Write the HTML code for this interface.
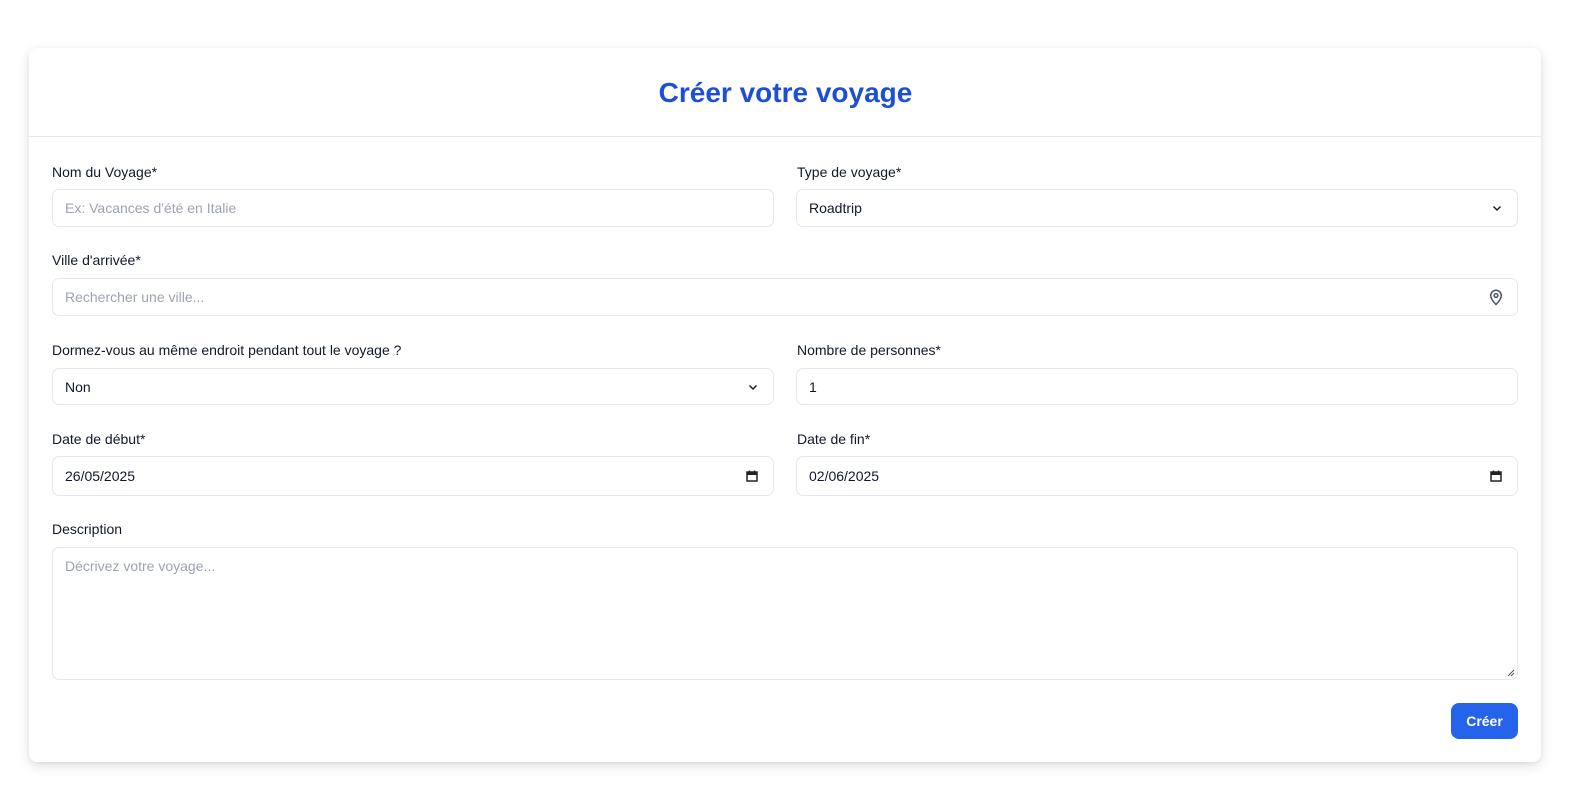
<!DOCTYPE html>
<html><head><meta charset="utf-8"><style>
*{box-sizing:border-box;margin:0;padding:0}
body{width:1595px;height:806px;background:#fff;font-family:"Liberation Sans",sans-serif;position:relative;overflow:hidden}
.card{position:absolute;left:29px;top:48px;width:1512px;height:714px;background:#fff;border-radius:8px;box-shadow:0 4px 12px rgba(0,0,0,0.12),0 1px 3px rgba(0,0,0,0.06)}
.hdr{position:absolute;left:29px;top:136px;width:1512px;height:1px;background:#e5e7eb}
h1{position:absolute;left:0;width:1571px;top:77px;text-align:center;font-size:28px;font-weight:bold;color:#1d4ed8}
.l{position:absolute;font-size:14px;color:#111827}
.i{position:absolute;border:1px solid #e2e8f0;border-radius:7px;font-size:14px;color:#111827;padding-left:12px;display:flex;align-items:center;background:#fff}
.ph{color:#9ca3af}
.ic{position:absolute;right:14px;top:50%;transform:translateY(-50%)}
.btn{position:absolute;left:1451px;top:703px;width:67px;height:36px;background:#2563eb;border-radius:8px;color:#fff;font-weight:bold;font-size:14px;display:flex;align-items:center;justify-content:center}
</style></head><body>
<div class="card"></div><div class="hdr"></div>
<h1>Créer votre voyage</h1>

<div class="l" style="left:52px;top:164px">Nom du Voyage*</div>
<div class="i" style="left:52px;top:189px;width:722px;height:38px"><span class="ph">Ex: Vacances d'été en Italie</span></div>
<div class="l" style="left:797px;top:164px">Type de voyage*</div>
<div class="i" style="left:796px;top:189px;width:722px;height:38px">Roadtrip<svg class="ic" width="12" height="12" viewBox="0 0 12 12"><path d="M2.5 4.5L6 8l3.5-3.5" fill="none" stroke="#111827" stroke-width="1.4"/></svg></div>

<div class="l" style="left:52px;top:252px">Ville d'arrivée*</div>
<div class="i" style="left:52px;top:278px;width:1466px;height:38px"><span class="ph">Rechercher une ville...</span><svg class="ic" style="right:12px" width="18" height="18" viewBox="0 0 24 24"><path d="M12 22s-7-6.5-7-12a7 7 0 0 1 14 0c0 5.5-7 12-7 12z" fill="none" stroke="#4b5563" stroke-width="2"/><circle cx="12" cy="10" r="2.5" fill="none" stroke="#4b5563" stroke-width="2"/></svg></div>

<div class="l" style="left:52px;top:342px">Dormez-vous au même endroit pendant tout le voyage ?</div>
<div class="i" style="left:52px;top:368px;width:722px;height:37px">Non<svg class="ic" width="12" height="12" viewBox="0 0 12 12"><path d="M2.5 4.5L6 8l3.5-3.5" fill="none" stroke="#111827" stroke-width="1.4"/></svg></div>
<div class="l" style="left:797px;top:342px">Nombre de personnes*</div>
<div class="i" style="left:796px;top:368px;width:722px;height:37px">1</div>

<div class="l" style="left:52px;top:431px">Date de début*</div>
<div class="i" style="left:52px;top:456px;width:722px;height:40px">26/05/2025<svg class="ic" width="14" height="14" viewBox="0 0 14 14"><rect x="2" y="3" width="10" height="9" fill="none" stroke="#222" stroke-width="1.5"/><rect x="2" y="3" width="10" height="3" fill="#222"/><path d="M4.5 1.5v2M9.5 1.5v2" stroke="#222" stroke-width="1.3"/></svg></div>
<div class="l" style="left:797px;top:431px">Date de fin*</div>
<div class="i" style="left:796px;top:456px;width:722px;height:40px">02/06/2025<svg class="ic" width="14" height="14" viewBox="0 0 14 14"><rect x="2" y="3" width="10" height="9" fill="none" stroke="#222" stroke-width="1.5"/><rect x="2" y="3" width="10" height="3" fill="#222"/><path d="M4.5 1.5v2M9.5 1.5v2" stroke="#222" stroke-width="1.3"/></svg></div>

<div class="l" style="left:52px;top:521px">Description</div>
<div class="i" style="left:52px;top:547px;width:1466px;height:133px;align-items:flex-start;padding-top:10px"><span class="ph">Décrivez votre voyage...</span><svg style="position:absolute;right:2px;bottom:2px" width="9" height="9" viewBox="0 0 9 9"><path d="M8 2L2 8M8 5L5 8" stroke="#555" stroke-width="1"/></svg></div>

<div class="btn">Créer</div>
</body></html>
